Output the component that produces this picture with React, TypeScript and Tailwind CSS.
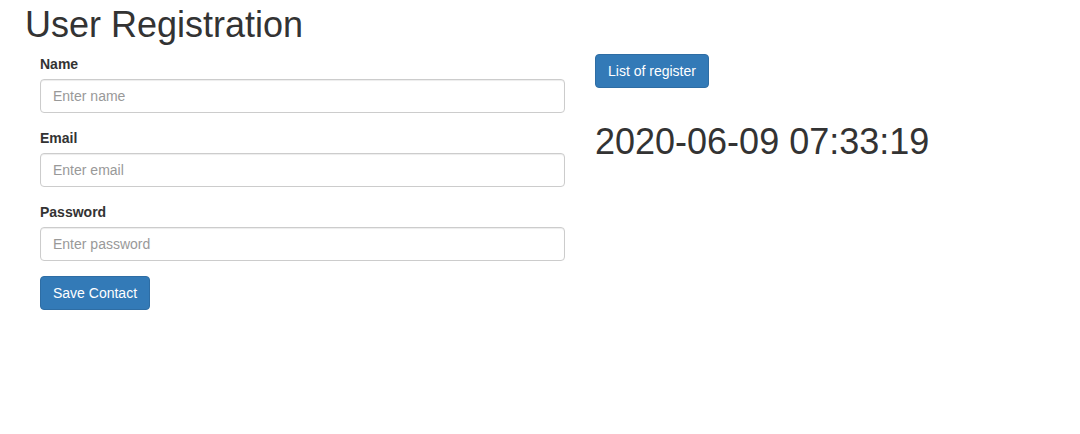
import React from "react";

const font = { fontFamily: '"Liberation Sans", Arial, Helvetica, sans-serif' };

function Field({ label, placeholder, type }: { label: string; placeholder: string; type: string }) {
  return (
    <div className="mb-[15px]">
      <label className="block mb-[5px] text-[14px] leading-[20px] font-bold text-[#333]">{label}</label>
      <input
        type={type}
        placeholder={placeholder}
        className="block w-full h-[34px] px-[12px] py-[6px] text-[14px] leading-[20px] text-[#555] bg-white border border-[#ccc] rounded-[4px] shadow-[inset_0_1px_1px_rgba(0,0,0,0.075)] placeholder:text-[#999] outline-none"
      />
    </div>
  );
}

export default function App() {
  return (
    <div className="w-[1080px] h-[434px] bg-white text-[#333] pl-[25px]" style={font}>
      <h1 className="text-[36px] leading-[1.1] font-normal mt-[5px] mb-[9px] text-[#333]">User Registration</h1>
      <div className="flex">
        <div className="w-[555px] px-[15px]">
          <form>
            <Field label="Name" placeholder="Enter name" type="text" />
            <Field label="Email" placeholder="Enter email" type="email" />
            <Field label="Password" placeholder="Enter password" type="password" />
            <button
              type="button"
              className="h-[34px] px-[12px] text-[14px] leading-[20px] text-white bg-[#337ab7] border border-[#2e6da4] rounded-[4px]"
            >
              Save Contact
            </button>
          </form>
        </div>
        <div className="px-[15px]">
          <button
            type="button"
            className="h-[34px] px-[12px] text-[14px] leading-[20px] text-white bg-[#337ab7] border border-[#2e6da4] rounded-[4px]"
          >
            List of register
          </button>
          <h1 className="text-[36px] leading-[1.1] font-normal mt-[34px] text-[#333]">2020-06-09 07:33:19</h1>
        </div>
      </div>
    </div>
  );
}
